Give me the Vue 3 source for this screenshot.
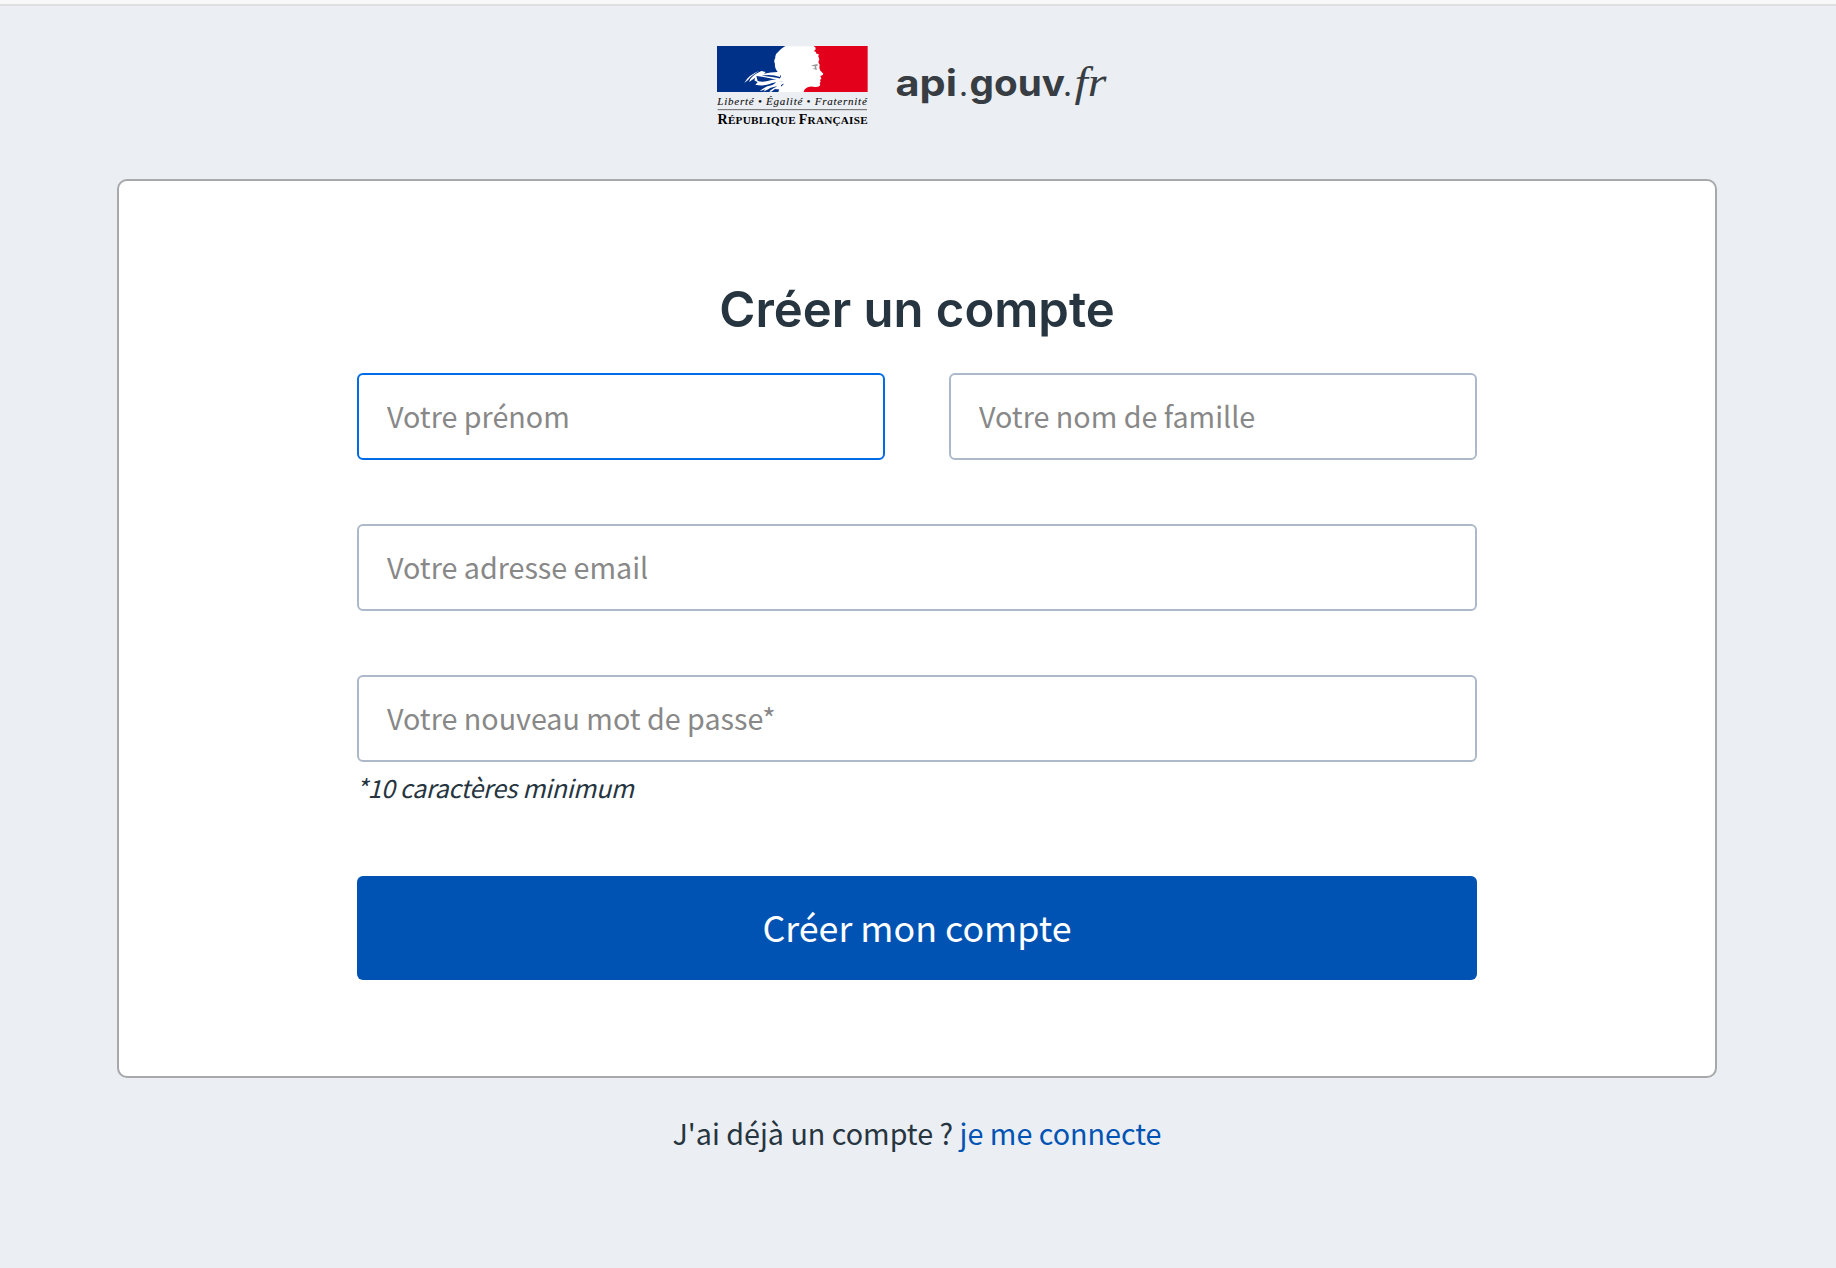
<script setup>
const names = [
  { id: 'given-name', label: 'Votre prénom', active: true },
  { id: 'family-name', label: 'Votre nom de famille', active: false },
]
</script>

<template>
  <div class="page">
    <div class="topbar"></div>
    <header class="header">
      <svg class="logo" viewBox="0 0 434 110" role="img" aria-label="api.gouv.fr">
        <g transform="scale(0.33333)">
          <rect x="52" y="49" width="450" height="137" fill="#fff" />
          <path fill="#003189" d="M51 48H256Q241 57 235 65Q224 72 226 84Q220 92 225 102Q223 112 231 124Q240 129 243 139L239 148Q249 155 251 163L239 174L235 186H51Z" />
          <path fill="#e2001a" d="M503 48H341L347 53L346 60L341 63L348 66L349 71L356 72L355 80L358 87L355 97L359 104L358 112L360 121L370 131L368 135L361 138L364 146L360 150L362 155L359 159L361 165Q358 172 345 171Q326 167 318 175Q312 179 311 186H503Z" />
          <path fill="#fff" d="M133 159Q143 136 178 122Q153 137 145 149ZM147 156Q151 138 184 123L197 126L192 131Q214 125 241 126L240 141Q215 132 185 137Q210 139 235 144L236 151Q198 141 169 138L173 153Q190 158 212 151L244 144L248 155Q221 155 207 163Q188 169 166 164L173 157L163 151L166 143ZM179 184Q193 169 217 165L242 149L252 160L238 169Q214 170 205 178L190 185L196 178ZM208 184Q218 174 243 165L244 179L225 177L213 186Z" />
          <path fill="#999" d="M333 108Q343 101 354 103L352 108L348 109L351 119Q344 120 338 115L345 115L344 109Z" />
          <path d="M53 239H501" stroke="#666" stroke-width="3" />
        </g>
        <text class="motto" x="17.3" y="74.7" textLength="149.5" lengthAdjust="spacing">Liberté • Égalité • Fraternité</text>
        <text class="republic" x="17.6" y="94" textLength="150" lengthAdjust="spacing"><tspan class="cap">R</tspan>ÉPUBLIQUE <tspan class="cap">F</tspan>RANÇAISE</text>
        <text class="brand" x="195.5" y="65.7" textLength="61.5" lengthAdjust="spacingAndGlyphs">api</text>
        <text class="thin" x="259" y="65.7">.</text>
        <text class="brand" x="269.5" y="65.7" textLength="95.5" lengthAdjust="spacingAndGlyphs">gouv</text>
        <text class="thin" x="363" y="65.7">.</text>
        <text class="fr" x="374.5" y="65.7" textLength="32" lengthAdjust="spacingAndGlyphs">fr</text>
      </svg>
    </header>

    <main class="card">
      <h1>Créer un compte</h1>
      <form class="form">
        <div class="row">
          <input v-for="f in names" :key="f.id" :class="{ active: f.active }" type="text" :placeholder="f.label" />
        </div>
        <input type="text" placeholder="Votre adresse email" />
        <input type="text" placeholder="Votre nouveau mot de passe*" />
        <div class="hint">*10 caractères minimum</div>
        <button type="button">Créer mon compte</button>
      </form>
    </main>

    <p class="footer">J'ai déjà un compte ? <a>je me connecte</a></p>
  </div>
</template>

<style>
body { background: #ebeef3; overflow: hidden; }
</style>

<style scoped>
.page {
  box-sizing: border-box;
  width: 1836px;
  height: 1268px;
  background: #ebeef3;
  font-family: "Noto Sans CJK SC", "Noto Sans", sans-serif;
  color: #26353f;
  overflow: hidden;
}
.topbar { box-sizing: border-box; height: 6px; background: #f8f8f8; border-bottom: 2px solid #dedfe0; }
.header { height: 173px; padding: 24px 2px 0 0; box-sizing: border-box; display: flex; justify-content: center; }
.logo { width: 434px; height: 110px; display: block; }
.motto { font: italic 11px "Liberation Serif", serif; fill: #111; stroke: #111; stroke-width: 0.1; }
.republic { font: bold 11.2px "Liberation Serif", serif; fill: #000; }
.cap { font-size: 14px; }
.brand { font: 700 37px Inter, sans-serif; fill: #373d42; }
.thin { font: 400 36px "Liberation Serif", serif; fill: #373d42; }
.fr { font: italic 400 42px "Liberation Serif", serif; fill: #373d42; }
.card {
  box-sizing: border-box;
  width: 1600px;
  height: 899px;
  margin-left: 117px;
  border: 2px solid #a7a8aa;
  border-radius: 10px;
  background: #fff;
  padding: 99px 238px 0;
}
h1 {
  margin: 0 0 33px;
  font: 600 49px/60px Inter, sans-serif;
  text-align: center;
  white-space: nowrap;
}
.form { display: flex; flex-direction: column; gap: 64px; }
.row { display: flex; gap: 64px; }
input {
  box-sizing: border-box;
  width: 100%;
  min-width: 0;
  height: 87px;
  padding: 0 28px 2px;
  border: 2px solid #adb9c9;
  border-radius: 6px;
  background: #fff;
  font: 400 28.7px "Noto Sans CJK SC", "Noto Sans", sans-serif;
  outline: none;
}
input::placeholder { color: #888; opacity: 1; }
input.active { border-color: #006be6; }
.hint {
  height: 40px;
  line-height: 36px;
  margin-top: -57px;
  margin-left: -1px;
  font-size: 25px;
  font-style: italic;
  letter-spacing: -0.3px;
}
button {
  height: 104px;
  margin-top: 3px;
  padding: 0 0 5px;
  border: 0;
  border-radius: 6px;
  background: #0053b3;
  color: #fff;
  font: 400 35.8px "Noto Sans CJK SC", "Noto Sans", sans-serif;
}
.footer { margin: 31px 2px 0 0; line-height: 48px; font-size: 28.7px; text-align: center; }
.footer a { color: #0053b3; }
</style>
